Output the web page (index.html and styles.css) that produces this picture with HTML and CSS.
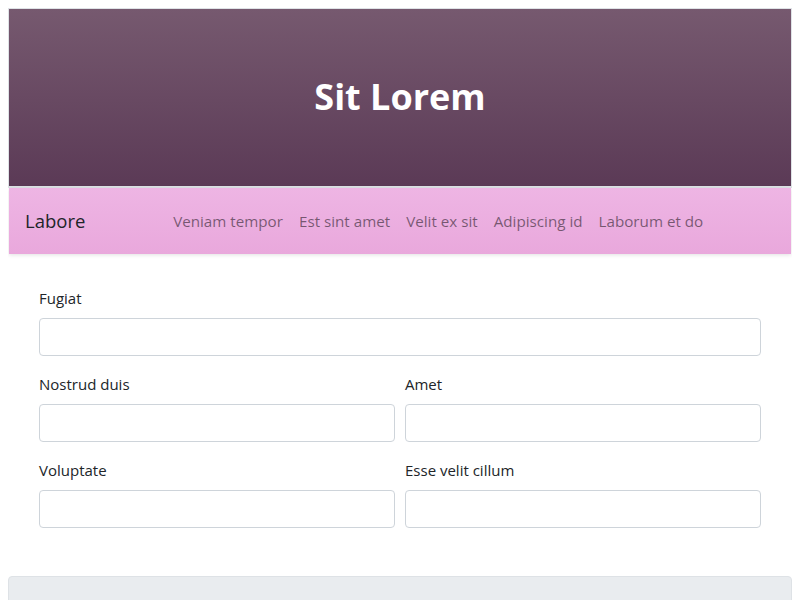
FILE: index.html
```html
<!DOCTYPE html>
<html lang="en">
<head>
<meta charset="utf-8">
<title>Sit Lorem</title>
<link rel="stylesheet" href="styles.css">
</head>
<body>
<header class="hero">
  <h1 class="hero-title">Sit Lorem</h1>
</header>
<nav class="navbar">
  <a class="brand" href="#">Labore</a>
  <ul class="nav-links">
    <li><a href="#">Veniam tempor</a></li>
    <li><a href="#">Est sint amet</a></li>
    <li><a href="#">Velit ex sit</a></li>
    <li><a href="#">Adipiscing id</a></li>
    <li><a href="#">Laborum et do</a></li>
  </ul>
</nav>
<main class="content">
  <form class="form">
    <div class="field">
      <label class="label">Fugiat</label>
      <input class="input" type="text">
    </div>
    <div class="row">
      <div class="field">
        <label class="label">Nostrud duis</label>
        <input class="input" type="text">
      </div>
      <div class="field">
        <label class="label">Amet</label>
        <input class="input" type="text">
      </div>
    </div>
    <div class="row">
      <div class="field">
        <label class="label">Voluptate</label>
        <input class="input" type="text">
      </div>
      <div class="field">
        <label class="label">Esse velit cillum</label>
        <input class="input" type="text">
      </div>
    </div>
  </form>
</main>
<footer class="footer-card"></footer>
</body>
</html>
```
FILE: styles.css
```css
* { box-sizing: border-box; }
body {
  margin: 8px;
  font-family: "Open Sans", "Noto Sans", sans-serif;
  font-size: 15px;
  line-height: 24px;
  color: #212529;
  background: #fff;
}
.hero {
  border: 1px solid #dee2e6;
  border-bottom: 2px solid #dee2e6;
  background: linear-gradient(to bottom, #76596f, #5b3a56);
  padding: 64px 16px 65px;
  text-align: center;
}
.hero-title {
  margin: 0;
  font-size: 36px;
  line-height: 48px;
  font-weight: 700;
  color: #fff;
}
.navbar {
  display: flex;
  align-items: center;
  padding: 13px 16px;
  margin: 0 1px;
  background: linear-gradient(to bottom, #eeb5e4, #e9a8dc);
  box-shadow: 0 1px 4px rgba(0,0,0,0.12);
}
.brand {
  font-size: 18.5px;
  line-height: 30px;
  padding: 5px 0;
  margin-right: 16px;
  color: #212529;
  text-decoration: none;
}
.nav-links {
  display: flex;
  list-style: none;
  margin: 0 auto;
  padding: 0;
}
.nav-links a {
  display: block;
  padding: 8px;
  font-size: 15.2px;
  color: rgba(0,0,0,0.5);
  text-decoration: none;
}
.content {
  padding: 32px 31px;
}
.form { margin: 0; }
.row {
  display: grid;
  grid-template-columns: 1fr 1fr;
  gap: 10px;
}
.field { margin-bottom: 16px; }
.label {
  display: block;
  margin-bottom: 8px;
}
.input {
  display: block;
  width: 100%;
  height: 38px;
  border: 1px solid #ced4da;
  border-radius: 4px;
  font: inherit;
  padding: 6px 12px;
  background: #fff;
}
.footer-card {
  height: 40px;
  background: #e9ecef;
  border: 1px solid #dee2e6;
  border-radius: 4px 4px 0 0;
}
```
